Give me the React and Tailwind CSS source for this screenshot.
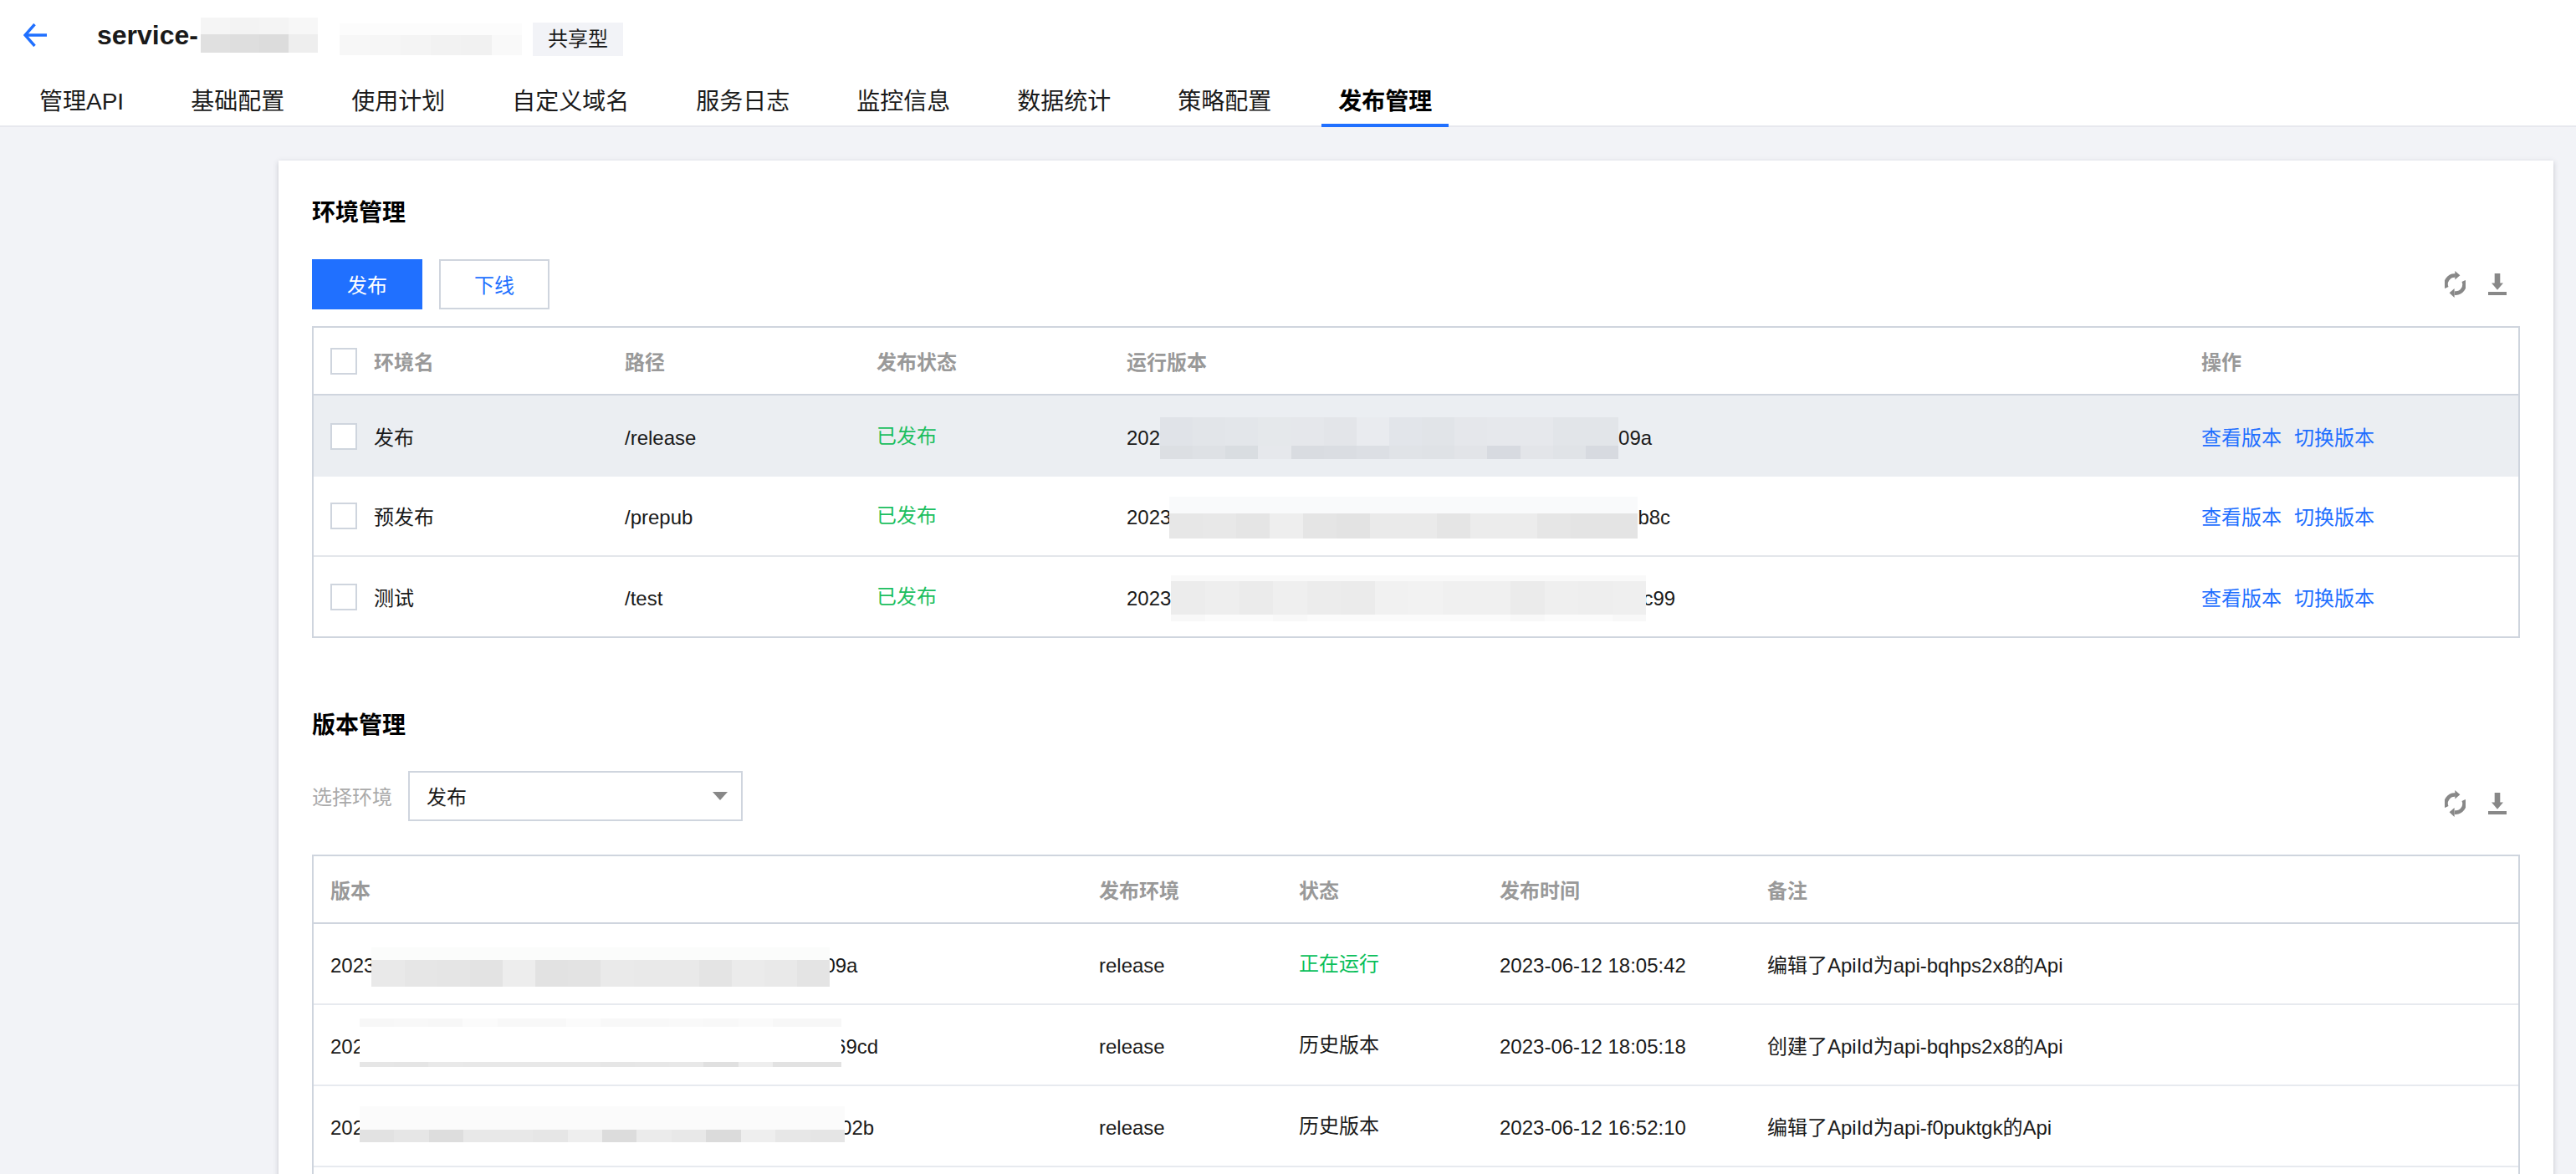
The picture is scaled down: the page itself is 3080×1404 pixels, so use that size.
import React from "react";

const TEXT = "text-[#1a1a1a]";

function Mosaic({ width, bands, className = "" }) {
  return (
    <div className={`relative z-10 flex shrink-0 flex-col ${className}`} style={{ width }}>
      {bands.map((b, i) => (
        <div key={i} className="flex" style={{ height: b.h }}>
          {b.colors
            ? b.colors.map((c, j) => <div key={j} className="flex-1" style={{ backgroundColor: c }} />)
            : <div className="flex-1" style={{ backgroundColor: b.c }} />}
        </div>
      ))}
    </div>
  );
}

function Check() {
  return <span className="mr-5 -mt-1 h-8 w-8 shrink-0 border-2 border-[#cfd5de] bg-white" />;
}

function RefreshIcon() {
  return (
    <svg width="25" height="32" viewBox="0 0 25 32" fill="none">
      <path d="M2.4 20A10.4 10.4 0 0 1 12.8 5.5" stroke="#888888" strokeWidth="4.6" />
      <path d="M22.6 12A10.4 10.4 0 0 1 11.8 26.5" stroke="#888888" strokeWidth="4.6" />
      <path d="M12.3 0L18.4 5.3L12.3 10.6Z" fill="#888888" />
      <path d="M11.6 21L5.6 26.2L11.6 32Z" fill="#888888" />
    </svg>
  );
}

function DownloadIcon() {
  return (
    <svg width="22" height="26" viewBox="0 0 22 26" fill="#888888">
      <rect x="7.7" y="0" width="6.6" height="12" />
      <path d="M4 11.5H18L11 19.8Z" />
      <rect x="0" y="22" width="22" height="4" />
    </svg>
  );
}

function Tools({ className = "" }) {
  return (
    <div className={`flex items-center pr-4 ${className}`}>
      <RefreshIcon />
      <span className="ml-[27px]"><DownloadIcon /></span>
    </div>
  );
}

const tabs = ["管理API", "基础配置", "使用计划", "自定义域名", "服务日志", "监控信息", "数据统计", "策略配置", "发布管理"];

function Header() {
  return (
    <header className="h-[152px] border-b-2 border-[#e7e8ee] bg-white">
      <div className="flex h-[84px] items-center pl-7">
        <svg width="28" height="28" viewBox="0 0 28 28" fill="none" stroke="#2070ff" strokeWidth="3.4">
          <path d="M13.5 1L2 14L13.5 27M2.5 14H28" />
        </svg>
        <span className={`ml-[60px] w-[124px] text-[32px] font-bold ${TEXT}`}>service-</span>
        <Mosaic
          width={140}
          bands={[
            { h: 20, colors: ["#f5f5f5", "#f3f3f3", "#f4f4f4", "#f7f7f7"] },
            { h: 22, colors: ["#e0e0e0", "#dedede", "#dcdcdc", "#eeeeee"] },
          ]}
        />
        <Mosaic
          width={218}
          className="ml-[26px] mt-[10px]"
          bands={[
            { h: 14, c: "#fcfcfc" },
            { h: 24, colors: ["#f7f7f7", "#f6f6f6", "#f4f4f4", "#f2f2f2", "#f1f1f1", "#f9f9f9"] },
          ]}
        />
        <span className={`ml-[13px] mt-[10px] flex h-10 w-[108px] items-center justify-center bg-[#f2f3f7] text-2xl ${TEXT}`}>
          共享型
        </span>
      </div>
      <nav className="flex h-[68px] gap-10 pl-[27px]">
        {tabs.map((t) => {
          const active = t === "发布管理";
          return (
            <a
              key={t}
              className={`flex h-[68px] items-center border-b-4 px-5 pt-3 text-[28px] ${
                active ? "border-[#2070ff] font-bold text-black" : `border-transparent ${TEXT}`
              }`}
            >
              {t}
            </a>
          );
        })}
      </nav>
    </header>
  );
}

const GRAY1 = ["#e9e9e9", "#e6e6e6", "#e5e5e5", "#e3e3e3", "#ededed", "#e2e2e2", "#e3e3e3", "#eaeaea", "#e9e9e9", "#e9e9e9", "#e4e4e4", "#ebebeb", "#e9e9e9", "#e4e4e4"];

const envRows = [
  {
    name: "发布", path: "/release", hover: true, h: "h-[97px]", line: "",
    pre: "202", post: "09a", postCls: "", mw: 548,
    bands: [
      { h: 34, colors: ["#e0e3e8", "#e2e5e9", "#e3e6ea", "#e5e8eb", "#e5e7eb", "#e3e5e9", "#e9ebef", "#e2e5ea", "#e1e4e8", "#e5e7eb", "#e6e8ec", "#e6e8ec", "#e2e5e9", "#e2e5e9"] },
      { h: 16, colors: ["#dcdfe3", "#dee1e5", "#d9dde1", "#e6e8ec", "#d9dce1", "#dadde2", "#dcdfe4", "#e0e3e7", "#dfe2e6", "#e2e4e8", "#d7dae0", "#e3e5e9", "#e0e3e7", "#d7dae0"] },
    ],
  },
  {
    name: "预发布", path: "/prepub", h: "h-[96px]", line: "border-b-2 border-[#e3e6eb]",
    pre: "2023", post: "b8c", postCls: "", mw: 560, mCls: "-ml-[2px]",
    bands: [
      { h: 20, c: "#f9fafb" },
      { h: 30, colors: ["#e7e7e7", "#e8e8e8", "#e5e5e5", "#eeeeee", "#e5e5e5", "#e3e3e3", "#eaeaea", "#eaeaea", "#e5e5e5", "#ececec", "#ececec", "#e6e6e6", "#e4e4e4", "#e4e4e4"] },
    ],
  },
  {
    name: "测试", path: "/test", h: "h-[95px]", line: "",
    pre: "2023", post: "c99", postCls: "-ml-[4px]", mw: 568,
    bands: [
      { h: 7, c: "#f9f9f9" },
      { h: 40, colors: ["#ececec", "#eeeeee", "#ebebeb", "#efefef", "#ececec", "#ebebeb", "#f1f1f1", "#f2f2f2", "#f0f0f0", "#f0f0f0", "#ebebeb", "#efefef", "#eeeeee", "#efefef"] },
      { h: 8, colors: ["#f8f8f8", "#fbfbfb", "#fbfbfb", "#f8f8f8", "#fbfbfb", "#fbfbfb", "#fbfbfb", "#fbfbfb", "#fbfbfb", "#fbfbfb", "#f8f8f8", "#fbfbfb", "#fbfbfb", "#f8f8f8"] },
    ],
  },
];

const envGrid = "grid grid-cols-[352px_301px_299px_1285px_1fr]";

function EnvTable() {
  return (
    <div className="mt-5 border-2 border-[#cfd5de]">
      <div className={`${envGrid} h-[81px] items-center border-b-2 border-[#cfd5de] pt-1 text-2xl font-semibold text-[#999999]`}>
        <div className="flex items-center pl-5"><Check />环境名</div>
        <div className="pl-5">路径</div>
        <div className="pl-5">发布状态</div>
        <div className="pl-5">运行版本</div>
        <div className="pl-5">操作</div>
      </div>
      {envRows.map((r) => (
        <div key={r.name} className={`${envGrid} ${r.h} ${r.line} items-center pt-1 text-2xl ${TEXT} ${r.hover ? "bg-[#ebeef2]" : "bg-white"}`}>
          <div className="flex items-center pl-5"><Check />{r.name}</div>
          <div className="pl-5">{r.path}</div>
          <div className="pb-1 pl-5 text-[#1cbf60]">已发布</div>
          <div className="flex items-center pl-5">
            <span>{r.pre}</span>
            <Mosaic width={r.mw} bands={r.bands} className={r.mCls || ""} />
            <span className={r.postCls}>{r.post}</span>
          </div>
          <div className="flex gap-[15px] pl-5 text-[#1f6fff]">
            <a>查看版本</a>
            <a>切换版本</a>
          </div>
        </div>
      ))}
    </div>
  );
}

const verRows = [
  {
    pre: "2023", post: "09a", mw: 548, mCls: "-ml-[4px] mt-[3px]", postCls: "-ml-[7px]",
    env: "release", st: "正在运行", run: true, t: "2023-06-12 18:05:42", note: "编辑了ApiId为api-bqhps2x8的Api",
    bands: [
      { h: 15, c: "#fbfcfb" },
      { h: 32, colors: GRAY1 },
    ],
  },
  {
    pre: "202", post: "69cd", mw: 576, mCls: "-ml-[5px] -mt-[10px]", postCls: "-ml-[8px]",
    env: "release", st: "历史版本", t: "2023-06-12 18:05:18", note: "创建了ApiId为api-bqhps2x8的Api",
    bands: [
      { h: 10, colors: ["#f7f7f7", "#f8f8f8", "#f7f7f7", "#fbfbfb", "#f8f8f8", "#f8f8f8", "#fbfbfb", "#f8f8f8", "#f8f8f8", "#f9f9f9", "#f8f8f8", "#fafafa", "#f7f7f7", "#f7f7f7"] },
      { h: 42, c: "#ffffff" },
      { h: 6, colors: ["#e6e6e6", "#e5e5e5", "#e9e9e9", "#e8e8e8", "#e8e8e8", "#e8e8e8", "#e8e8e8", "#e6e6e6", "#e7e7e7", "#e8e8e8", "#e0e0e0", "#eeeeee", "#e2e2e2", "#e2e2e2"] },
    ],
  },
  {
    pre: "202", post: "02b", mw: 580, mCls: "-ml-[5px] -mt-[9px]", postCls: "-ml-[5px]",
    env: "release", st: "历史版本", t: "2023-06-12 16:52:10", note: "编辑了ApiId为api-f0puktgk的Api",
    bands: [
      { h: 28, c: "#fbfbfb" },
      { h: 15, colors: ["#e2e2e2", "#e6e6e6", "#dddddd", "#e8e8e8", "#e8e8e8", "#e6e6e6", "#eeeeee", "#dcdcdc", "#ebebeb", "#e8e8e8", "#dbdbdb", "#eeeeee", "#e7e7e7", "#e5e5e5"] },
    ],
  },
];

const verGrid = "grid grid-cols-[919px_239px_240px_320px_1fr]";

function VersionTable() {
  return (
    <div className="mt-10 border-2 border-[#cfd5de]">
      <div className={`${verGrid} h-[81px] items-center border-b-2 border-[#cfd5de] pt-1 text-2xl font-semibold text-[#999999]`}>
        <div className="pl-5">版本</div>
        <div className="pl-5">发布环境</div>
        <div className="pl-5">状态</div>
        <div className="pl-5">发布时间</div>
        <div className="pl-5">备注</div>
      </div>
      {verRows.map((r) => (
        <div key={r.t} className={`${verGrid} h-[97px] items-center border-b-2 border-[#e7eaef] pt-1 text-2xl ${TEXT}`}>
          <div className="flex items-center pl-5">
            <span>{r.pre}</span>
            <Mosaic width={r.mw} bands={r.bands} className={r.mCls} />
            <span className={r.postCls}>{r.post}</span>
          </div>
          <div className="pl-5">{r.env}</div>
          <div className={`pb-1 pl-5 ${r.run ? "text-[#0abf5b]" : ""}`}>{r.st}</div>
          <div className="pl-5">{r.t}</div>
          <div className="pl-5">{r.note}</div>
        </div>
      ))}
      <div className="h-[97px]" />
    </div>
  );
}

export default function App() {
  return (
    <div className="h-[1404px] w-[3080px] overflow-hidden bg-[#f2f3f7] font-['Liberation_Sans','Noto_Sans_CJK_SC',sans-serif]">
      <Header />
      <main className="pl-[333px] pt-10">
        <section className="w-[2720px] bg-white px-10 pt-[41px] shadow-[0_2px_6px_rgba(54,58,80,0.25)]">
          <h2 className="h-10 text-[28px] font-bold leading-[44px] text-black">环境管理</h2>
          <div className="mt-[37px] flex items-center justify-between">
            <div className="flex gap-5">
              <button className="h-[60px] w-[132px] bg-[#2070ff] pt-1 text-2xl text-white">发布</button>
              <button className="h-[60px] w-[132px] border-2 border-[#cfd5de] bg-white pt-1 text-2xl text-[#2070ff]">下线</button>
            </div>
            <Tools />
          </div>
          <EnvTable />

          <h2 className="mt-[83px] h-10 text-[28px] font-bold leading-[44px] text-black">版本管理</h2>
          <div className="mt-9 flex items-start justify-between">
            <div className="flex items-center">
              <span className="w-[115px] pt-1 text-2xl text-[#aaaaaa]">选择环境</span>
              <div className={`flex h-[60px] w-[400px] items-center justify-between border-2 border-[#cfd5de] pl-5 pr-4 text-2xl ${TEXT}`}>
                <span className="pt-1">发布</span>
                <svg width="18" height="10" viewBox="0 0 18 10" fill="#888888"><path d="M0 0H18L9 10Z" /></svg>
              </div>
            </div>
            <Tools className="mt-[23px]" />
          </div>
          <VersionTable />
        </section>
      </main>
    </div>
  );
}
